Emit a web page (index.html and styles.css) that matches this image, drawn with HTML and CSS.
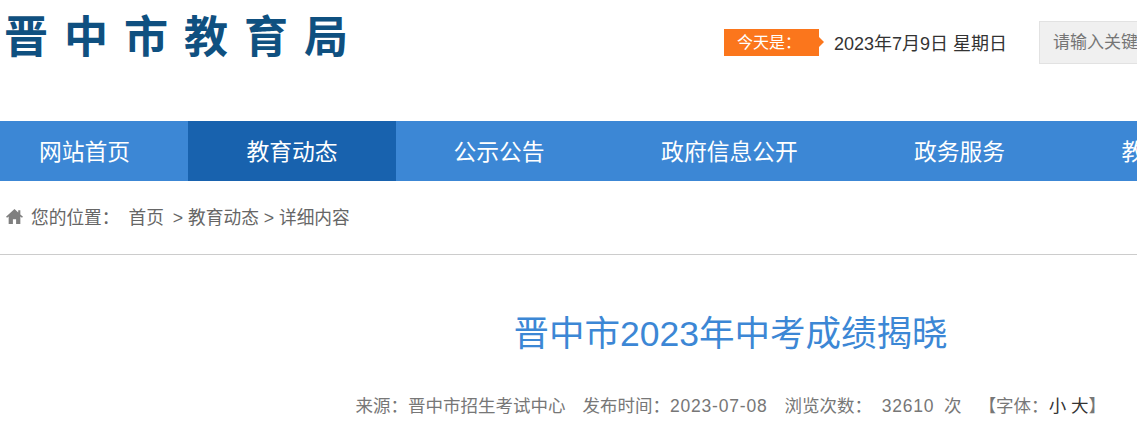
FILE: index.html
```html
<!DOCTYPE html>
<html lang="zh-CN">
<head>
<meta charset="UTF-8" />
<title>晋中市2023年中考成绩揭晓</title>
<link rel="stylesheet" href="styles.css">
</head>
<body>
<header class="top">
  <div class="logo">晋中市教育局</div>
  <div class="today">
    <span class="today-tag">今天是：</span>
    <span class="today-date">2023年7月9日 星期日</span>
  </div>
  <div class="search">请输入关键字</div>
</header>

<nav class="nav">
  <a class="nav-item home" href="#">网站首页</a>
  <a class="nav-item active" href="#">教育动态</a>
  <a class="nav-item notice" href="#">公示公告</a>
  <a class="nav-item gov" href="#">政府信息公开</a>
  <a class="nav-item service" href="#">政务服务</a>
  <a class="nav-item more" href="#">教育资源</a>
</nav>

<div class="crumbs">
  <svg class="home-icon" viewBox="0 0 16 14" width="17" height="15" aria-hidden="true">
    <path d="M8 0 L0 7.2 L1 8.2 L2.5 7 V14 H6.5 V9.5 H9.5 V14 H13.5 V7 L15 8.2 L16 7.2 L13.5 5 V1 H11.5 V3.2 Z" fill="#7f7f7f" />
  </svg>
  <span class="crumbs-label">您的位置：</span>
  <span class="crumbs-path">首页</span>
  <span class="crumbs-rest">&gt; 教育动态 &gt; 详细内容</span>
</div>

<main class="article">
  <h1 class="title">晋中市2023年中考成绩揭晓</h1>
  <div class="meta">
    <span>来源：晋中市招生考试中心</span>
    <span>发布时间：<span class="num">2023-07-08</span></span>
    <span>浏览次数：&nbsp; <span class="num">32610</span>&nbsp; 次</span>
    <span class="font-size">【字体：<b>小</b> <b>大</b>】</span>
  </div>
</main>
</body>
</html>
```

FILE: styles.css
```css
* {
  box-sizing: border-box;
}

html,
body {
  margin: 0;
  height: 431px;
  overflow: hidden;
}

body {
  width: 1137px;
  background: #fff;
  color: #666;
  font-family: "Liberation Sans", "Noto Sans CJK SC", sans-serif;
  font-size: 18px;
}

a {
  color: inherit;
  text-decoration: none;
}

.top {
  display: flex;
  align-items: flex-start;
  height: 121px;
  white-space: nowrap;
}

.logo {
  flex: none;
  width: 724px;
  padding: 11px 0 0 4px;
  color: #0f5080;
  font-size: 44px;
  line-height: 54px;
  font-weight: 700;
  letter-spacing: 16px;
}

.today {
  flex: none;
  display: flex;
  align-items: center;
  width: 315px;
  height: 27px;
  margin-top: 29px;
}

.today-tag {
  position: relative;
  width: 95px;
  height: 27px;
  padding-left: 13px;
  background: #fb761c;
  color: #fff;
  font-size: 16px;
  line-height: 27px;
}

.today-tag::after {
  content: "";
  position: absolute;
  top: 8px;
  right: -5px;
  border-left: 5px solid #fb761c;
  border-top: 5px solid transparent;
  border-bottom: 5px solid transparent;
}

.today-date {
  margin-left: 15px;
  margin-top: -2px;
  color: #333;
  font-size: 18px;
}

.search {
  flex: none;
  width: 140px;
  height: 43px;
  margin-top: 21px;
  padding-left: 13px;
  background: #f0f0f0;
  border: 1px solid #e2e2e2;
  color: #757575;
  font-size: 17px;
  line-height: 41px;
  overflow: hidden;
}

.nav {
  display: flex;
  height: 60px;
  background: #3c87d5;
  white-space: nowrap;
  overflow: hidden;
}

.nav-item {
  flex: none;
  padding-top: 3px;
  color: #fff;
  font-size: 22.8px;
  line-height: 57px;
  text-align: center;
}

.home { width: 188px; padding-right: 19px; }
.active { width: 208px; background: #1862ae; }
.notice { width: 208px; padding-right: 2px; }
.gov { width: 260px; padding-right: 9px; }
.service { width: 208px; padding-right: 17px; }
.more { width: 190px; }

.crumbs {
  display: flex;
  align-items: center;
  height: 74px;
  padding: 0 0 3px 6px;
  border-bottom: 1px solid #ccc;
  font-size: 17.7px;
  white-space: nowrap;
}

.home-icon {
  margin-right: 8px;
}

.crumbs-path {
  margin-left: 9px;
}

.crumbs-rest {
  margin-left: 9px;
}

.article {
  text-align: center;
}

.title {
  margin: 56px 0 0;
  padding-left: 324px;
  color: #3c87d5;
  font-size: 35.5px;
  line-height: 46px;
  font-weight: 400;
  white-space: nowrap;
}

.meta {
  display: flex;
  justify-content: flex-end;
  gap: 17px;
  margin-top: 37px;
  padding-right: 31px;
  color: #777;
  font-size: 17.5px;
  line-height: 24px;
  white-space: nowrap;
}

.num {
  letter-spacing: 0.8px;
}

.font-size b {
  color: #333;
  font-weight: 400;
}
```
